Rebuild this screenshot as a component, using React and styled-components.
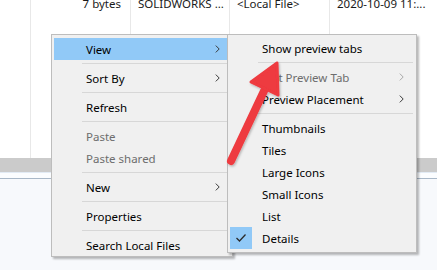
import React from 'react';
import styled, { createGlobalStyle } from 'styled-components';

const GlobalStyle = createGlobalStyle`
  html, body {
    margin: 0;
    padding: 0;
    background: #ffffff;
  }
  body {
    font-family: "Segoe UI", "Noto Sans", "Open Sans", sans-serif;
    font-size: 11.5px;
    color: #000;
    overflow: hidden;
  }
`;

const Screen = styled.div`
  position: relative;
  width: 437px;
  height: 270px;
  overflow: hidden;
  background: #f7f9fc;
  display: flex;
  flex-direction: column;
`;

const FileList = styled.div`
  height: 158px;
  background: #ffffff;
  display: grid;
  grid-template-columns: 30px 100px 99px 100px 1fr;
`;

const Column = styled.div`
  box-sizing: border-box;
  border-left: ${p => (p.$noLine ? 'none' : '1px solid #e8e8e8')};
  overflow: hidden;
`;

const CellText = styled.div`
  margin-top: -7px;
  height: 22px;
  line-height: 22px;
  white-space: nowrap;
  color: #1a1a1a;
  text-align: ${p => (p.$right ? 'right' : 'left')};
  padding: ${p => (p.$right ? '0 9px 0 0' : '0 0 0 7px')};
`;

const ScrollBand = styled.div`
  height: 14px;
  background: #cbcbcb;
`;

const PaneEdge = styled.div`
  height: 5px;
  background: #fbfdff;
  border-top: 1px solid #e2ebf5;
  border-bottom: 1px solid #a9b8c8;
`;

const Menu = styled.div`
  position: absolute;
  left: ${p => p.$left}px;
  top: ${p => p.$top}px;
  width: ${p => p.$width}px;
  box-sizing: border-box;
  background: #f0f0f0;
  border: 1px solid #bdbdbd;
  padding: ${p => p.$pad};
  box-shadow: 2px 2px 2px rgba(0, 0, 0, 0.28);
`;

const Item = styled.div`
  height: 22px;
  display: flex;
  align-items: center;
  padding-right: 10px;
  background: ${p => (p.$active ? '#91c9f7' : 'transparent')};
  color: ${p => (p.$disabled ? '#6d6d6d' : '#000')};
  white-space: nowrap;
`;

const CheckBox = styled.div`
  width: 22px;
  height: 22px;
  flex: none;
  display: flex;
  align-items: center;
  justify-content: center;
  background: ${p => (p.$checked ? '#91c9f7' : 'transparent')};
`;

const Label = styled.span`
  flex: 1;
  margin-left: 10px;
`;

const Separator = styled.div`
  height: 7px;
  display: flex;
  align-items: center;
  padding-left: 28px;
  padding-right: 1px;

  &::after {
    content: '';
    flex: 1;
    height: 1px;
    background: #d7d7d7;
  }
`;

const Overlay = styled.svg`
  position: absolute;
  left: 0;
  top: 0;
  pointer-events: none;
`;

const Chevron = ({ disabled }) => (
  <svg width="5" height="8" viewBox="0 0 5 8">
    <polyline
      points="0.8,0.6 4.2,4 0.8,7.4"
      fill="none"
      stroke={disabled ? '#a8a8a8' : '#3a3a3a'}
      strokeWidth="1"
    />
  </svg>
);

const Check = () => (
  <svg width="12" height="10" viewBox="0 0 12 10">
    <polyline points="1.5,5 4.5,8 10.5,1.5" fill="none" stroke="#2b2b2b" strokeWidth="1.3" />
  </svg>
);

const MenuItem = ({ label, sub, active, disabled, checked }) => (
  <Item $active={active} $disabled={disabled}>
    <CheckBox $checked={checked}>{checked && <Check />}</CheckBox>
    <Label>{label}</Label>
    {sub && <Chevron disabled={disabled} />}
  </Item>
);

const mainItems = [
  { label: 'View', sub: true, active: true },
  'sep',
  { label: 'Sort By', sub: true },
  'sep',
  { label: 'Refresh' },
  'sep',
  { label: 'Paste', disabled: true },
  { label: 'Paste shared', disabled: true },
  'sep',
  { label: 'New', sub: true },
  'sep',
  { label: 'Properties' },
  'sep',
  { label: 'Search Local Files' },
];

const viewItems = [
  { label: 'Show preview tabs' },
  'sep',
  { label: 'Edit Preview Tab', sub: true, disabled: true },
  { label: 'Preview Placement', sub: true },
  'sep',
  { label: 'Thumbnails' },
  { label: 'Tiles' },
  { label: 'Large Icons' },
  { label: 'Small Icons' },
  { label: 'List' },
  { label: 'Details', checked: true },
];

const renderItems = items =>
  items.map((it, i) =>
    it === 'sep' ? <Separator key={i} /> : <MenuItem key={i} {...it} />
  );

const App = () => {
  return (
    <>
      <GlobalStyle />
      <Screen>
        <FileList>
          <Column $noLine />
          <Column>
            <CellText $right>7 bytes</CellText>
          </Column>
          <Column>
            <CellText>SOLIDWORKS ...</CellText>
          </Column>
          <Column>
            <CellText>&lt;Local File&gt;</CellText>
          </Column>
          <Column>
            <CellText>2020-10-09 11:...</CellText>
          </Column>
        </FileList>
        <ScrollBand />
        <PaneEdge />

        <Menu $left={51} $top={34} $width={182} $pad="3px 2px 0 2px">
          {renderItems(mainItems)}
        </Menu>

        <Menu $left={227} $top={34} $width={190} $pad="2px 2px 3px 2px">
          {renderItems(viewItems)}
        </Menu>

        <Overlay width="437" height="270" viewBox="0 0 437 270">
          <defs>
            <filter id="arrowShadow" x="-20%" y="-20%" width="140%" height="140%">
              <feDropShadow dx="1" dy="1.5" stdDeviation="1.2" floodColor="#000" floodOpacity="0.25" />
            </filter>
          </defs>
          <g filter="url(#arrowShadow)" fill="#ee3a3f" stroke="#ee3a3f" strokeLinejoin="round">
            <line x1="231" y1="161" x2="264" y2="91" strokeWidth="8" strokeLinecap="round" />
            <polygon points="277,63 251,82 278,95" strokeWidth="3" />
          </g>
        </Overlay>
      </Screen>
    </>
  );
};

export default App;
